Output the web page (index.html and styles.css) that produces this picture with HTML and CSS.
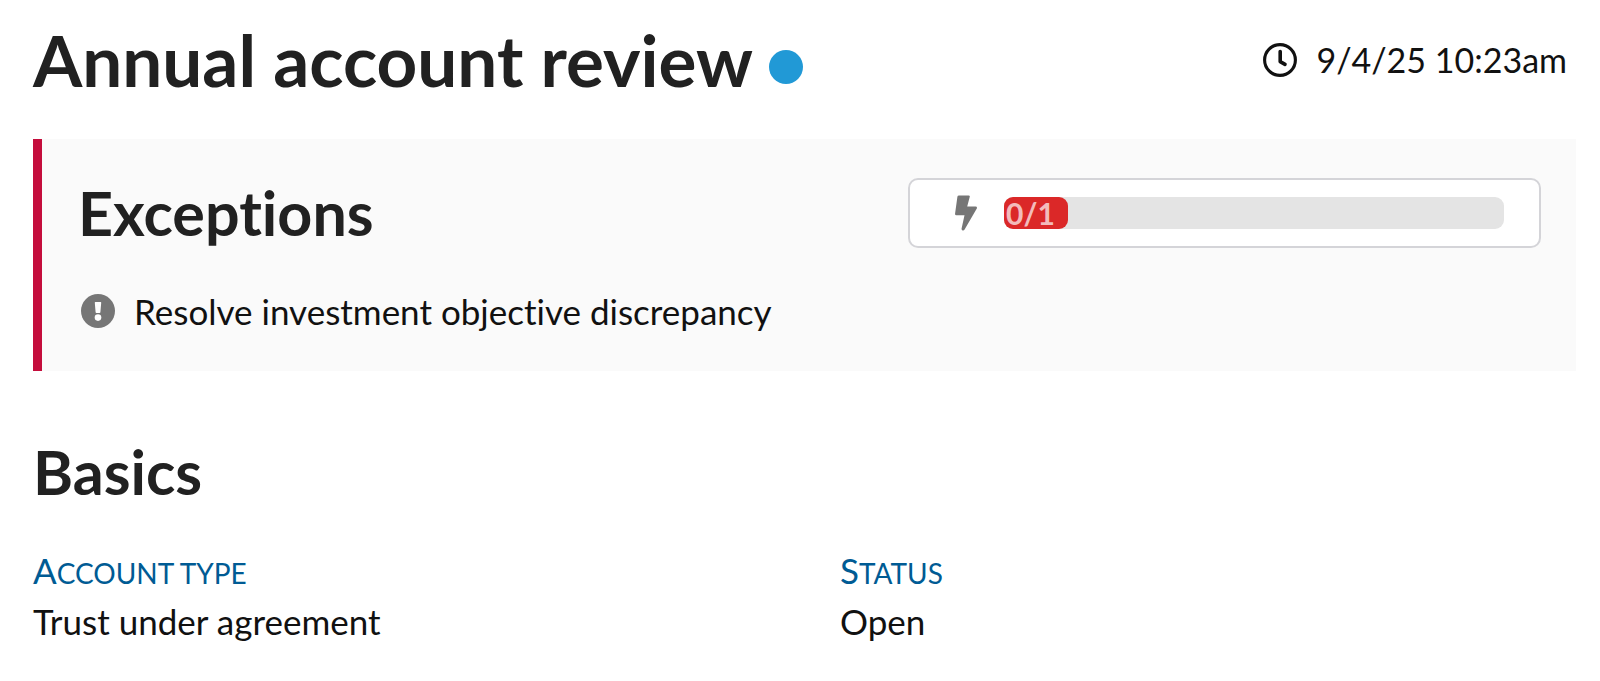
FILE: index.html
```html
<!DOCTYPE html>
<html lang="en">
<head>
<meta charset="utf-8">
<title>Annual account review</title>
<link rel="stylesheet" href="styles.css">
</head>
<body>
<main class="page">
  <header class="page-header">
    <h1 class="page-title">Annual account review <span class="status-dot"></span></h1>
    <div class="timestamp">
      <svg class="icon" viewBox="0 0 34 34" aria-hidden="true"><circle cx="17" cy="17" r="15.4" fill="none" stroke="currentColor" stroke-width="3.1"/><path d="M17.2 8.6V18.6L22 21.4" fill="none" stroke="currentColor" stroke-width="3.6" stroke-linecap="round" stroke-linejoin="round"/></svg>
      <time datetime="2025-09-04T10:23">9/4/25 10:23am</time>
    </div>
  </header>

  <section class="exceptions">
    <div class="exceptions-header">
      <h2 class="section-title">Exceptions</h2>
      <div class="meter">
        <svg class="bolt" viewBox="0 0 22 36" aria-hidden="true"><path d="M4 .5H13.6Q15.2 .5 14.7 2L12.2 11.5H20.6Q22.5 11.7 21.8 13.5L9.6 34.5Q8.8 35.8 7.5 35.4Q6.3 35 6.6 33.5L9.5 20.2L1.3 20.2Q-.2 20.2 .1 18.5L2.4 1.8Q2.6 .5 4 .5Z" fill="currentColor"/></svg>
        <div class="track"><div class="fill">0/1</div></div>
      </div>
    </div>
    <ul class="exception-list">
      <li class="exception-item">
        <svg class="icon icon-alert" viewBox="0 0 34 34" aria-hidden="true"><circle cx="17" cy="17" r="17" fill="currentColor"/><path d="M14.4 8H19.6Q20.3 8 20.2 8.8L19.4 18.2Q19.3 19 18.6 19H15.4Q14.7 19 14.6 18.2L13.8 8.8Q13.7 8 14.4 8Z" fill="#fff"/><circle cx="17" cy="23.6" r="3.3" fill="#fff"/></svg>
        <span>Resolve investment objective discrepancy</span>
      </li>
    </ul>
  </section>

  <section class="basics">
    <h2 class="section-title">Basics</h2>
    <dl class="fields">
      <div class="field"><dt class="field-label">Account type</dt><dd class="field-value">Trust under agreement</dd></div>
      <div class="field"><dt class="field-label">Status</dt><dd class="field-value">Open</dd></div>
    </dl>
  </section>
</main>
</body>
</html>
```
FILE: styles.css
```css
* { box-sizing: border-box; }

body {
  margin: 0;
  background: #fff;
  color: #111;
  font-family: Lato, "Liberation Sans", sans-serif;
  font-size: 35px;
  line-height: 42px;
  font-variant-ligatures: none;
}

h1, h2, ul, dl, dd { margin: 0; padding: 0; }

.page { padding: 17px 24px 32px 33px; }

.page-header {
  display: flex;
  justify-content: space-between;
  align-items: center;
  padding-right: 9px;
  margin-bottom: 36px;
}

.page-title {
  color: #212121;
  font-size: 71px;
  line-height: 86px;
  font-weight: 700;
}

.status-dot {
  display: inline-block;
  width: 34px;
  height: 34px;
  border-radius: 50%;
  background: #2199d6;
  vertical-align: 3px;
}

.timestamp {
  display: flex;
  align-items: center;
  gap: 19px;
  font-size: 34px;
}

.icon {
  flex: none;
  width: 34px;
  height: 34px;
}

.icon-alert { color: #767676; }

.exceptions {
  border-left: 9px solid #c40d3c;
  background: #fafafa;
  padding: 37px 35px 39px 36px;
}

.exceptions-header {
  display: grid;
  grid-template-columns: 1fr 633px;
  align-items: center;
}

.section-title {
  color: #212121;
  font-size: 61px;
  line-height: 74px;
  font-weight: 700;
}

.meter {
  display: flex;
  align-items: center;
  gap: 27px;
  padding: 17px 35px 17px 45px;
  border: 2px solid #d4d4d8;
  border-radius: 10px;
  background: #fff;
}

.bolt {
  flex: none;
  width: 22px;
  height: 36px;
  margin: -2px 0;
  color: #767676;
}

.track {
  flex: 1;
  border-radius: 9px;
  background: #e4e4e4;
}

.fill {
  width: 64px;
  padding-left: 2px;
  border-radius: 9px;
  background: #db2828;
  color: rgba(255, 255, 255, 0.7);
  font-size: 30px;
  line-height: 32px;
  font-weight: 700;
}

.exception-list {
  margin-top: 40px;
  list-style: none;
}

.exception-item {
  display: flex;
  align-items: center;
  gap: 19px;
  padding-left: 3px;
}

.basics { margin-top: 64px; }

.fields {
  display: grid;
  grid-template-columns: 1fr 1fr;
  column-gap: 71px;
  margin-top: 40px;
}

.field-label {
  margin-bottom: 6px;
  color: #005b94;
  font-size: 28px;
  text-transform: uppercase;
}

.field-label::first-letter { font-size: 35px; }
```
